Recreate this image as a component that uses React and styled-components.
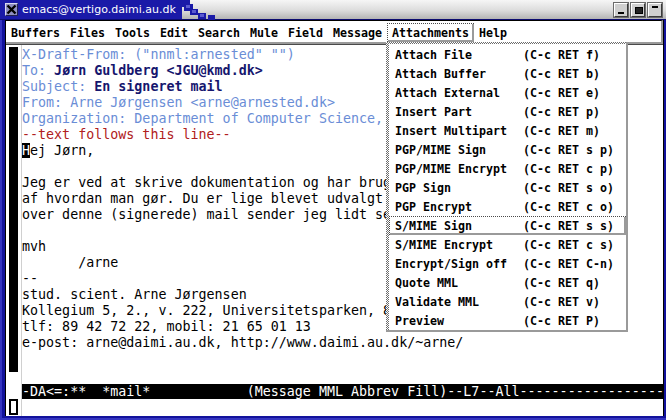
import React from 'react'
import styled, { createGlobalStyle, css } from 'styled-components'

const GlobalStyle = createGlobalStyle`
	html, body {
		margin: 0;
		padding: 0;
		background: #ffffff;
	}
	* {
		box-sizing: border-box;
	}
`

const MONO = `"DejaVu Sans Mono", "Liberation Mono", monospace`
const CHECKER = `repeating-conic-gradient(#6c6c6c 0 25%, #ffffff 0 50%) 0 0 / 2px 2px`

const Window = styled.div`
	position: relative;
	width: 666px;
	height: 420px;
	display: flex;
	flex-direction: column;
	background: #12129c;
	overflow: hidden;
`

const TitleBar = styled.div`
	position: relative;
	height: 20px;
	flex-shrink: 0;
	display: flex;
	align-items: center;
	padding: 0 4px 0 5px;
	background:
		linear-gradient(to right, #1a1aa8 0, #1a1aa8 182px, transparent 182px),
		linear-gradient(to bottom, #f6f6f6 0, #dcdcdc 55%, #b4b4b4 100%);
	border-bottom: 1px solid #0c0c70;
`

const Stairs = styled.svg`
	position: absolute;
	left: 180px;
	top: 0;
`

const CloseBox = styled.div`
	width: 13px;
	height: 13px;
	background: #8f8fc0;
	border: 1px solid;
	border-color: #d8d8f0 #202050 #202050 #d8d8f0;
	display: flex;
	align-items: center;
	justify-content: center;
`

const Title = styled.span`
	margin-left: 4px;
	font-family: "DejaVu Sans", Verdana, sans-serif;
	font-size: 11px;
	color: #ffffff;
	position: relative;
	z-index: 1;
`

const TitleButtons = styled.div`
	margin-left: auto;
	display: flex;
	gap: 3px;
`

const TitleButton = styled.div`
	width: 14px;
	height: 14px;
	background: #cfcfcf;
	border: 1px solid;
	border-color: #ffffff #3a3a3a #3a3a3a #ffffff;
	box-shadow: 0 0 0 1px #6a6a6a;
	position: relative;
	&::after {
		content: '';
		position: absolute;
		background: #000;
		${p => p.kind === 'min' && css`left: 3px; bottom: 2px; width: 6px; height: 2px;`}
		${p => p.kind === 'max' && css`left: 3px; top: 3px; width: 6px; height: 5px; border: 1px solid #000; background: #222;`}
		${p => p.kind === 'shade' && css`left: 3px; top: 2px; width: 6px; height: 2px;`}
	}
`

const Frame = styled.div`
	flex: 1;
	display: flex;
	padding: 0 2px 4px 5px;
	background: #12129c;
	box-shadow: inset 2px 0 0 #3434c0, inset 0 -2px 0 #3434c0;
`

const Content = styled.div`
	flex: 1;
	display: flex;
	flex-direction: column;
	background: #ffffff;
	border-left: 1px solid #000;
	border-right: 1px solid #000;
`

const MenuBar = styled.div`
	height: 24px;
	display: flex;
	padding-top: 2px;
	border-top: 1px solid #000;
	border-bottom: 2px solid #9a9a9a;
	border-right: 2px solid #9a9a9a;
	font-family: ${MONO};
	font-weight: bold;
	font-size: 11.63px;
	color: #000;
`

const activeBox = css`
	border-top: 1px dotted #4a4a4a;
	border-left: 1px dotted #4a4a4a;
	box-shadow: inset -2px -2px 0 #9a9a9a;
`

const MenuBarItem = styled.div`
	height: 19px;
	display: flex;
	align-items: center;
	padding: 0 5px;
	white-space: pre;
	${p => p.active && css`
		${activeBox}
		padding: 0 5px 0 4px;
	`}
`

const Editor = styled.div`
	flex: 1;
	display: grid;
	grid-template-columns: 16px 1fr;
	grid-template-rows: 1fr 15px 17px;
	border-top: 1px solid #4a4a4a;
	font-family: ${MONO};
	font-size: 13.33px;
	min-height: 0;
`

const Gutter = styled.div`
	padding-left: 3px;
	border-right: 1px solid #d0d0d0;
`

const Thumb = styled.div`
	width: 9px;
	background: #000;
	${p => p.mini ? css`
		height: 16px;
		background: #ffffff;
		border: 2px solid #000;
	` : css`
		margin-top: 2px;
		height: 325px;
	`}
`

const TextBody = styled.div`
	padding-top: 2px;
	overflow: hidden;
	white-space: pre;
	line-height: 16px;
	color: #000;
`

const Line = styled.div`
	height: 16px;
`

const Span = styled.span`
	color: ${p => ({ field: '#6a8dd6', value: '#16166e', sep: '#b02020', body: '#000' }[p.tone])};
	font-weight: ${p => (p.tone === 'value' ? 'bold' : 'normal')};
`

const Cursor = styled.span`
	background: #000;
	color: #fff;
`

const ModeLine = styled.div`
	background: #000;
	color: #fff;
	line-height: 15px;
	white-space: pre;
	overflow: hidden;
`

const MiniBuffer = styled.div``

const Dropdown = styled.div`
	position: absolute;
	left: 386px;
	top: 42px;
	width: 242px;
	height: 290px;
	padding: 2px 0 0 3px;
	background: ${CHECKER};
	border-right: 2px solid #9a9a9a;
	border-bottom: 2px solid #9a9a9a;
	font-family: ${MONO};
	font-weight: bold;
	font-size: 11.63px;
	color: #000;
`

const DropdownInner = styled.div`
	height: 100%;
	background: #ffffff;
	padding-top: 1px;
`

const DropItem = styled.div`
	height: 19px;
	display: grid;
	grid-template-columns: 128px 1fr;
	align-items: center;
	padding-left: 6px;
	white-space: pre;
	${p => p.active && css`
		${activeBox}
		padding-left: 5px;
	`}
`

const menus = ['Buffers', 'Files', 'Tools', 'Edit', 'Search', 'Mule', 'Field', 'Message', 'Attachments', 'Help']

const items = [
	['Attach File', '(C-c RET f)'],
	['Attach Buffer', '(C-c RET b)'],
	['Attach External', '(C-c RET e)'],
	['Insert Part', '(C-c RET p)'],
	['Insert Multipart', '(C-c RET m)'],
	['PGP/MIME Sign', '(C-c RET s p)'],
	['PGP/MIME Encrypt', '(C-c RET c p)'],
	['PGP Sign', '(C-c RET s o)'],
	['PGP Encrypt', '(C-c RET c o)'],
	['S/MIME Sign', '(C-c RET s s)'],
	['S/MIME Encrypt', '(C-c RET c s)'],
	['Encrypt/Sign off', '(C-c RET C-n)'],
	['Quote MML', '(C-c RET q)'],
	['Validate MML', '(C-c RET v)'],
	['Preview', '(C-c RET P)'],
]

// each line is a list of [tone, text]
const lines = [
	[['field', 'X-Draft-From: ("nnml:arnested" "")']],
	[['field', 'To: '], ['value', 'Jørn Guldberg <JGU@kmd.dk>']],
	[['field', 'Subject: '], ['value', 'En signeret mail']],
	[['field', 'From: Arne Jørgensen <arne@arnested.dk>']],
	[['field', 'Organization: Department of Computer Science, University of Aarhus']],
	[['sep', '--text follows this line--']],
	'cursor',
	[],
	[['body', 'Jeg er ved at skrive dokumentation og har brug for et eksempel på']],
	[['body', 'af hvordan man gør. Du er lige blevet udvalgt til det, så']],
	[['body', 'over denne (signerede) mail sender jeg lidt senere.']],
	[],
	[['body', 'mvh']],
	[['body', '       /arne']],
	[['body', '-- ']],
	[['body', 'stud. scient. Arne Jørgensen']],
	[['body', 'Kollegium 5, 2., v. 222, Universitetsparken, 8000 Århus C']],
	[['body', 'tlf: 89 42 72 22, mobil: 21 65 01 13']],
	[['body', 'e-post: arne@daimi.au.dk, http://www.daimi.au.dk/~arne/']],
]

const modeLine = '-DA<=:**  *mail*            (Message MML Abbrev Fill)--L7--All' + '-'.repeat(18)

export default function App() {
	return (
		<>
			<GlobalStyle />
			<Window>
				<TitleBar>
					<Stairs width="44" height="20" viewBox="0 0 44 20">
						<rect x="0" y="0" width="10" height="7" fill="#1a1aa8" />
						<rect x="4" y="4" width="9" height="7" fill="#1a1aa8" />
						<rect x="10" y="9" width="8" height="6" fill="#1a1aa8" />
						<rect x="12" y="10" width="4" height="3" fill="#5a5ad0" />
						<rect x="18" y="13" width="8" height="6" fill="#1a1aa8" />
						<rect x="20" y="14" width="4" height="3" fill="#5a5ad0" />
						<rect x="28" y="15" width="7" height="5" fill="#1a1aa8" />
						<rect x="6" y="5" width="4" height="3" fill="#5a5ad0" />
					</Stairs>
					<CloseBox>
						<svg width="11" height="11" viewBox="0 0 11 11">
							<path d="M1.5 1.5 L9.5 9.5 M9.5 1.5 L1.5 9.5" stroke="#000" strokeWidth="2.4" />
						</svg>
					</CloseBox>
					<Title>emacs@vertigo.daimi.au.dk</Title>
					<TitleButtons>
						<TitleButton kind="min" />
						<TitleButton kind="max" />
						<TitleButton kind="shade" />
					</TitleButtons>
				</TitleBar>
				<Frame>
					<Content>
						<MenuBar>
							{menus.map(m => (
								<MenuBarItem key={m} active={m === 'Attachments'}>{m}</MenuBarItem>
							))}
						</MenuBar>
						<Editor>
							<Gutter><Thumb /></Gutter>
							<TextBody>
								{lines.map((line, i) => {
									if (line === 'cursor') {
										return <Line key={i}><Cursor>H</Cursor>ej Jørn,</Line>
									}
									return (
										<Line key={i}>
											{line.map(([tone, text], j) => <Span key={j} tone={tone}>{text}</Span>)}
										</Line>
									)
								})}
							</TextBody>
							<Gutter />
							<ModeLine>{modeLine}</ModeLine>
							<Gutter><Thumb mini /></Gutter>
							<MiniBuffer />
						</Editor>
					</Content>
				</Frame>
				<Dropdown>
					<DropdownInner>
						{items.map(([label, key]) => (
							<DropItem key={label} active={label === 'S/MIME Sign'}>
								<span>{label}</span>
								<span>{key}</span>
							</DropItem>
						))}
					</DropdownInner>
				</Dropdown>
			</Window>
		</>
	)
}
